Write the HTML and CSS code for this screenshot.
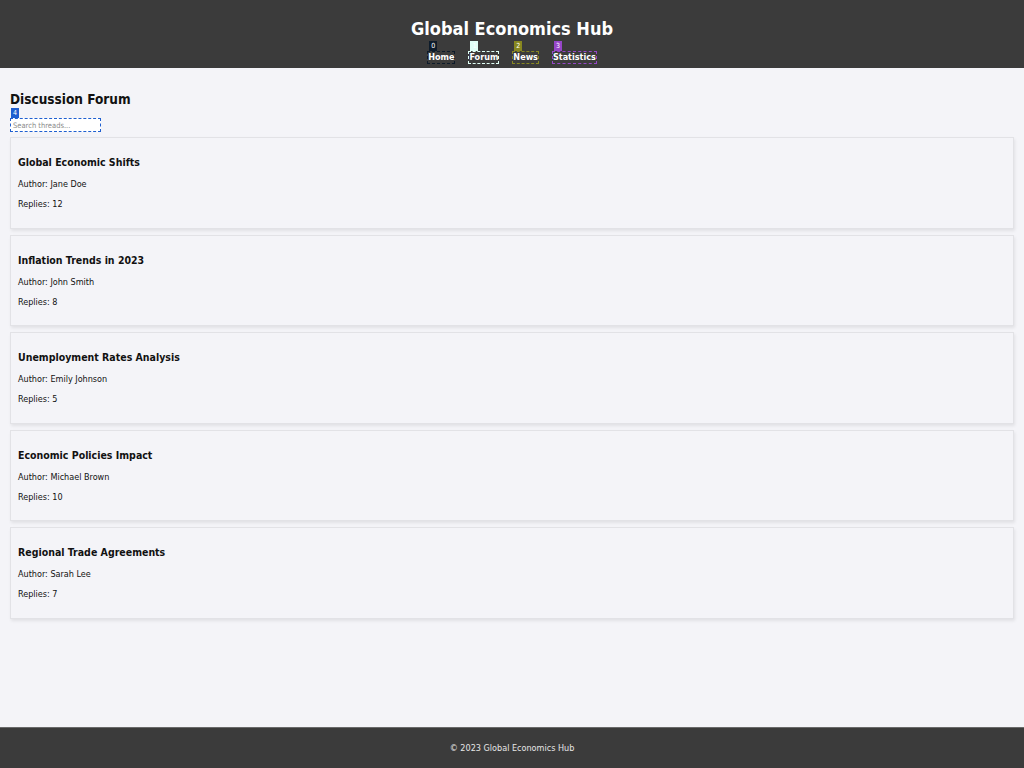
FILE: index.html
```html
<!DOCTYPE html>
<html lang="en">
<head>
<meta charset="utf-8">
<title>Global Economics Hub</title>
<link rel="stylesheet" href="styles.css">
</head>
<body>
<div class="page">
  <header class="site-header">
    <h1 class="site-title">Global Economics Hub</h1>
    <nav class="main-nav">
      <a class="nav-link tag-0" href="#">Home<span class="badge">0</span></a>
      <a class="nav-link tag-1" href="#">Forum<span class="badge">1</span></a>
      <a class="nav-link tag-2" href="#">News<span class="badge">2</span></a>
      <a class="nav-link tag-3" href="#">Statistics<span class="badge">3</span></a>
    </nav>
  </header>
  <main class="content">
    <h2 class="section-title">Discussion Forum</h2>
    <div class="search-wrap">
      <input class="search" type="text" placeholder="Search threads...">
      <span class="badge badge-search">4</span>
    </div>
    <div class="threads">
      <article class="thread">
        <h3 class="thread-title">Global Economic Shifts</h3>
        <p class="thread-meta">Author: Jane Doe</p>
        <p class="thread-meta">Replies: 12</p>
      </article>
      <article class="thread">
        <h3 class="thread-title">Inflation Trends in 2023</h3>
        <p class="thread-meta">Author: John Smith</p>
        <p class="thread-meta">Replies: 8</p>
      </article>
      <article class="thread">
        <h3 class="thread-title">Unemployment Rates Analysis</h3>
        <p class="thread-meta">Author: Emily Johnson</p>
        <p class="thread-meta">Replies: 5</p>
      </article>
      <article class="thread">
        <h3 class="thread-title">Economic Policies Impact</h3>
        <p class="thread-meta">Author: Michael Brown</p>
        <p class="thread-meta">Replies: 10</p>
      </article>
      <article class="thread">
        <h3 class="thread-title">Regional Trade Agreements</h3>
        <p class="thread-meta">Author: Sarah Lee</p>
        <p class="thread-meta">Replies: 7</p>
      </article>
    </div>
  </main>
  <footer class="site-footer">© 2023 Global Economics Hub</footer>
</div>
</body>
</html>
```

FILE: styles.css
```css
html, body {
  margin: 0;
  padding: 0;
}
body {
  background: #f4f4f8;
  color: #111;
  font-family: "DejaVu Sans Condensed", "DejaVu Sans", sans-serif;
  font-stretch: condensed;
  font-size: 9px;
}
.page {
  min-height: 100vh;
  display: flex;
  flex-direction: column;
}
.site-header {
  background: #3b3b3b;
  color: #fff;
  text-align: center;
  padding: 18px 0 4px;
}
.site-title {
  margin: 0;
  font-size: 18px;
  line-height: 21px;
}
.main-nav {
  display: flex;
  justify-content: center;
  gap: 13px;
  padding-top: 12px;
}
.nav-link {
  position: relative;
  color: #fff;
  font-weight: bold;
  font-size: 9px;
  text-decoration: none;
  padding: 0;
  line-height: 11px;
  border: 1px dashed currentColor;
}
.nav-link .badge {
  position: absolute;
  left: 1px;
  top: -11px;
}
.badge {
  display: block;
  width: 8px;
  height: 10px;
  font-size: 7px;
  line-height: 10px;
  text-align: center;
  color: #fff;
  font-weight: normal;
}
.tag-0 { border-color: #0d1b2a; }
.tag-0 .badge { background: #0d1b2a; }
.tag-1 { border-color: #e0fff6; }
.tag-1 .badge { background: #e0fff6; }
.tag-2 { border-color: #878720; }
.tag-2 .badge { background: #878720; }
.tag-3 { border-color: #9646c8; }
.tag-3 .badge { background: #9646c8; }

.content {
  flex: 1;
  padding: 0 10px 10px;
}
.section-title {
  font-size: 13.5px;
  margin: 23px 0 11px;
}
.search-wrap {
  position: relative;
  display: inline-block;
}
.search {
  display: block;
  box-sizing: border-box;
  width: 91px;
  height: 14px;
  margin: 0;
  padding: 0 2px;
  font-family: inherit;
  font-stretch: condensed;
  font-size: 7.5px;
  background: #fff;
  border: 1px dashed #1f5fd0;
  outline: none;
}
.search::placeholder {
  color: #8a8a8a;
}
.badge-search {
  position: absolute;
  left: 1px;
  top: -10px;
  background: #1f5fd0;
}
.threads {
  margin-top: 5px;
}
.thread {
  background: #f4f4f8;
  border: 1px solid #e2e2e6;
  box-shadow: 1px 2px 3px rgba(0, 0, 0, 0.08);
  padding: 9px 7px 9.5px;
  margin-bottom: 6px;
}
.thread-title {
  font-size: 10.5px;
  line-height: 14px;
  margin: 8px 0 9px;
}
.thread-meta {
  line-height: 12px;
  margin: 8px 0;
}
.site-footer {
  background: #3b3b3b;
  border-top: 1px solid #6a6a6a;
  color: #e6e6e6;
  text-align: center;
  padding: 15px 0 14px;
  line-height: 11px;
}
```
